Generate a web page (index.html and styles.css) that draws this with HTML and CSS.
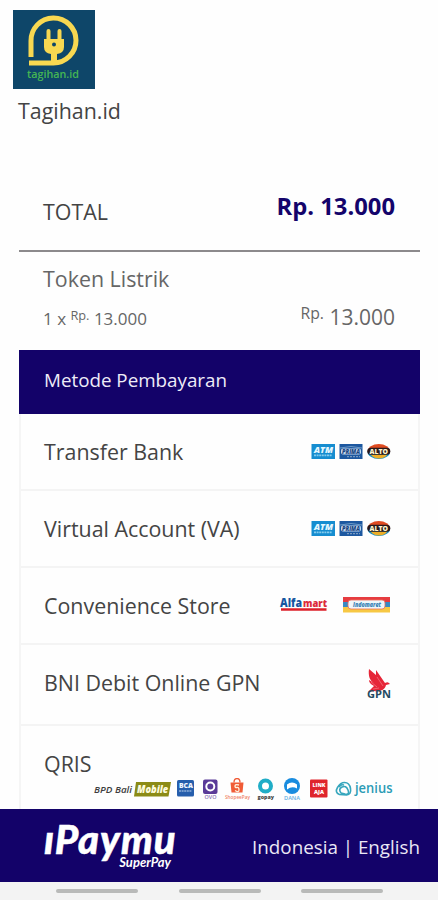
FILE: index.html
```html
<!DOCTYPE html>
<html lang="id">
<head>
<meta charset="utf-8">
<meta name="viewport" content="width=device-width, initial-scale=1">
<title>Tagihan.id</title>
<link rel="stylesheet" href="styles.css">
</head>
<body>
<svg class="symbols" aria-hidden="true">
  <symbol id="banks" viewBox="0 0 80 18">
    <rect x="0.5" y="1" width="23.5" height="15" fill="#168dd0"/>
    <text class="mark italic" x="3" y="9.500" font-size="9" textLength="19" lengthAdjust="spacingAndGlyphs" fill="#e5f8ff">ATM</text>
    <path d="M3 12.300h18" stroke="#83cbed" stroke-width="1.8" stroke-dasharray="2 .6"/>
    <rect x="28.5" y="1" width="23" height="15" fill="#1d58a0"/>
    <path d="M29 5q11-3 22 0" fill="none" stroke="#6f9bc7"/>
    <rect x="30" y="5.500" width="20" height="6" rx="2" fill="#c4d8ed"/>
    <text class="mark italic" x="31" y="10.500" font-size="6" textLength="18" lengthAdjust="spacingAndGlyphs" fill="#194582">PRIMA</text>
    <path d="M36 13.700h13" stroke="#90abc7" stroke-dasharray="2 1"/>
    <path d="M56.500 8.500a11.3 7.5 0 0 1 22.6 0z" fill="#df4b21"/>
    <path d="M56.500 8.500a11.3 7.5 0 0 0 22.6 0z" fill="#168fc5"/>
    <path d="M59.500 11.500h17q-3 4-8.500 4t-8.500-4z" fill="#ecad27"/>
    <rect x="56.300" y="4.800" width="23" height="7" rx="3.500" fill="#27191c"/>
    <text class="mark" x="58.500" y="10.900" font-size="7" textLength="18.500" lengthAdjust="spacingAndGlyphs" fill="#fff5cf">ALTO</text>
  </symbol>
</svg>
<div class="page">
  <header class="merchant">
    <svg class="merchant-logo" width="82" height="79" viewBox="0 0 82 79">
      <rect width="82" height="79" fill="#0e4669"/>
      <path d="M18 47V31a22.500 22.500 0 1 1 22.500 22H16" fill="none" stroke="#f8d851" stroke-width="5"/>
      <path d="M35.500 21v9M46.500 21v9" stroke="#f8d851" stroke-width="4" stroke-linecap="round"/>
      <path d="M31 29h20v8q0 6-7 7v8h-6v-8q-7-1-7-7z" fill="#f8d851"/>
      <circle cx="41" cy="34.500" r="2" fill="#0e4669"/>
      <text class="tag" x="14" y="68" font-size="11" textLength="52" lengthAdjust="spacingAndGlyphs">tagihan.id</text>
    </svg>
    <h1 class="merchant-name">Tagihan.id</h1>
  </header>

  <main class="order">
    <div class="total">
      <span>TOTAL</span>
      <strong class="total-value">Rp. 13.000</strong>
    </div>
    <section class="item">
      <h2 class="item-name">Token Listrik</h2>
      <div class="item-line">
        <span class="item-qty">1 x <span class="currency">Rp.</span> 13.000</span>
        <span class="item-price"><span class="currency">Rp.</span> 13.000</span>
      </div>
    </section>
    <h2 class="methods-title">Metode Pembayaran</h2>
    <ul class="methods">
      <li class="method"><span>Transfer Bank</span><svg class="logo" width="80" height="18"><use href="#banks"/></svg></li>
      <li class="method"><span>Virtual Account (VA)</span><svg class="logo" width="80" height="18"><use href="#banks"/></svg></li>
      <li class="method"><span>Convenience Store</span>
        <svg class="logo" width="112" height="20" viewBox="0 0 112 20">
          <text class="mark" x="1" y="10.500" font-size="12" textLength="22" lengthAdjust="spacingAndGlyphs" fill="#1756a0">Alfa</text>
          <text class="mark" x="24" y="10.500" font-size="11" textLength="24" lengthAdjust="spacingAndGlyphs" fill="#dc2b39">mart</text>
          <path d="M2 13.500h45.500" stroke="#dc202a" stroke-width="2.500"/>
          <rect x="64" y="1" width="47" height="5" fill="#e63c40"/>
          <rect x="64" y="6" width="47" height="5" fill="#388bc4"/>
          <rect x="64" y="11" width="47" height="5.500" fill="#f7c844"/>
          <rect x="69" y="4" width="37" height="9" rx="3" fill="#eef7fa" stroke="#ee6d59" stroke-width=".8"/>
          <text class="mark italic" x="74" y="11" font-size="7" textLength="28" lengthAdjust="spacingAndGlyphs" fill="#3b83b6">Indomaret</text>
        </svg>
      </li>
      <li class="method gpn"><span>BNI Debit Online GPN</span>
        <svg class="logo" width="28" height="36" viewBox="0 0 28 36">
          <path d="M4 2l7 6V3l9 13c3-2 4 0 5 1l-4 1c-1 5-6 7-12 6l-6 1 6-6c-4-2-5-4-5-6l5 3C5 14 3 9 4 2z" fill="#e62638"/>
          <path d="M6 15l6 5M12 10l6 9M8 22l6-1" stroke="#f47d87" stroke-width=".7"/>
          <text class="mark gpn-text" x="2" y="31" font-size="11" textLength="24" lengthAdjust="spacingAndGlyphs" fill="#244b62">GPN</text>
        </svg>
      </li>
      <li class="method qris"><span>QRIS</span>
        <svg class="logo qris-logos" width="306" height="24" viewBox="0 0 306 24">
          <text class="mark medium italic" x="1" y="15" font-size="9.500" textLength="38" lengthAdjust="spacingAndGlyphs" fill="#3d3d3d">BPD Bali</text>
          <path d="M43 4h35l-2.500 14.500H41z" fill="#8b8b16"/>
          <text class="mark italic" x="44" y="15" font-size="10.500" textLength="31" lengthAdjust="spacingAndGlyphs" fill="#fffde0">Mobile</text>
          <rect x="84" y="2" width="17" height="16.500" rx="1.500" fill="#265eac"/>
          <text class="mark" x="86" y="10" font-size="7" textLength="14" lengthAdjust="spacingAndGlyphs" fill="#eef6ff">BCA</text>
          <path d="M86 13h13" stroke="#8eb0da" stroke-width="1.500" stroke-dasharray="2 .6"/>
          <rect x="110" y="1.500" width="14.500" height="14.500" rx="2" fill="#5a3a98"/>
          <circle cx="117.300" cy="8.500" r="4" fill="none" stroke="#fff" stroke-width="2"/>
          <text class="mark medium" x="111.500" y="21" font-size="5.500" textLength="12" lengthAdjust="spacingAndGlyphs" fill="#8b73b4">OVO</text>
          <path d="M137.500 4.500h13l-1 10h-11z" fill="#f05b36"/>
          <path d="M141 4.500q0-4 3-4t3 4" fill="none" stroke="#f05b36" stroke-width="1.300"/>
          <path d="M146 7q-4-1-4 1t2 1.500 2 2.500-4 .5" fill="none" stroke="#fff0db" stroke-width="1.300"/>
          <text class="mark medium" x="132" y="20.500" font-size="5.500" textLength="25" lengthAdjust="spacingAndGlyphs" fill="#f08265">ShopeePay</text>
          <circle cx="172.500" cy="8" r="5.500" fill="#fff" stroke="#20adc7" stroke-width="4"/>
          <text class="mark" x="164.500" y="20.500" font-size="5.500" textLength="16.500" lengthAdjust="spacingAndGlyphs" fill="#444">gopay</text>
          <circle cx="199" cy="8" r="8" fill="#198cdf"/>
          <path d="M194 6.500q5-4 10 0v4q-5-3-10 1z" fill="#fff"/>
          <text class="mark medium" x="191" y="21.500" font-size="6" textLength="16" lengthAdjust="spacingAndGlyphs" fill="#65aee1">DANA</text>
          <rect x="217" y="1.500" width="17.500" height="18" rx="1" fill="#df252c"/>
          <text class="mark" x="219.500" y="8.500" font-size="5" textLength="13" lengthAdjust="spacingAndGlyphs" fill="#fff">LINK</text>
          <text class="mark" x="221" y="15.500" font-size="5" textLength="10" lengthAdjust="spacingAndGlyphs" fill="#fff">AJA</text>
          <path d="M246.500 16.500q-5-2-2-7t7-5q5 0 6 6t-4 6.500zM248 15q-3-4 1-6t6 3-3 4zM246 9q2-3 5-2" fill="none" stroke="#36a6bd" stroke-width="1.600"/>
          <text class="jenius" x="262" y="14.500" font-size="13.500" textLength="37.500" lengthAdjust="spacingAndGlyphs" fill="#2b9bb5">jenius</text>
        </svg>
      </li>
    </ul>
  </main>

  <footer class="footer">
    <div class="brand"><span class="brand-name">ıPaymu</span><span class="brand-sub">SuperPay</span></div>
    <div class="languages">Indonesia | English</div>
  </footer>
  <nav class="system-bar"><i></i><i></i><i></i></nav>
</div>
</body>
</html>
```
FILE: styles.css
```css
* { box-sizing: border-box; }
body { margin: 0; background: #fefefe; color: #444; font-family: "Open Sans", sans-serif; font-size: 21.400px; line-height: 30px; }
h1, h2, ul { margin: 0; padding: 0; font-weight: 400; font-size: inherit; }
.symbols { display: none; }
.page { height: 900px; overflow: hidden; display: flex; flex-direction: column; }
.merchant { height: 181px; padding: 9.500px 0 0 13px; }
.merchant-logo { display: block; }
.merchant-name { margin: 7px 0 0 5px; font-size: 21.400px; }
.order { margin: 0 18px 0 19px; height: 628px; overflow: hidden; }
.total { height: 71px; padding: 0 25px 0 24px; display: flex; justify-content: space-between; border-bottom: 2px solid #8c8a8c; }
.total > span { padding-top: 16px; }
.total-value { padding-top: 10px; color: #14046b; font-size: 23.800px; }
.item { height: 97.500px; padding: 12px 25px 0 24px; color: #666; }
.item-line { margin-top: 8px; display: flex; justify-content: space-between; align-items: baseline; }
.item-qty { font-size: 17px; }
.item-price { font-size: 21px; }
.currency { font-size: .75em; line-height: 0; vertical-align: .4em; }
.methods-title { height: 64.500px; padding: 15px 25px 0; background: #130269; color: #eeecf8; font-size: 18.800px; }
.methods { list-style: none; border: solid #f5f5f5; border-width: 0 2px; }
.method { height: 77px; padding: 1px 27px 0 23px; display: flex; align-items: center; justify-content: space-between; border-bottom: 2px solid #f4f4f4; white-space: nowrap; }
.method.gpn { height: 81px; padding-right: 25px; }
.method.gpn > span { margin-top: -4px; }
.method.qris { height: 90px; padding: 23px 19px 0 23px; flex-direction: column; align-items: stretch; justify-content: flex-start; }
.method .qris-logos { align-self: flex-end; flex: none; margin-top: -1px; }
.mark { font-family: "Open Sans", sans-serif; font-weight: 800; }
.medium { font-weight: 600; }
.italic { font-style: italic; }
.gpn-text { font-weight: 700; }
.jenius { font-family: "Open Sans", sans-serif; font-weight: 600; }
.tag { font-family: "Open Sans", sans-serif; font-weight: 600; fill: #45b653; }
.footer { height: 73px; padding: 0 18px 0 44px; display: flex; justify-content: space-between; background: #130269; color: #eae7f5; }
.brand { width: 132px; display: flex; flex-direction: column; font-family: Lato, sans-serif; font-style: italic; color: #fff; }
.brand-name { margin-top: 12px; font-size: 40px; line-height: 36px; font-weight: 900; letter-spacing: 1px; -webkit-text-stroke: .5px #fff; }
.brand-sub { padding-right: 5px; text-align: right; font-size: 13px; line-height: 10px; font-weight: 700; }
.languages { padding-top: 23px; font-size: 18.800px; }
.system-bar { height: 18px; padding: 7px 55px 0 56px; display: flex; justify-content: space-between; background: #f3f3f3; }
.system-bar i { width: 82px; height: 4px; border-radius: 2px; background: #b9bab9; }
```
